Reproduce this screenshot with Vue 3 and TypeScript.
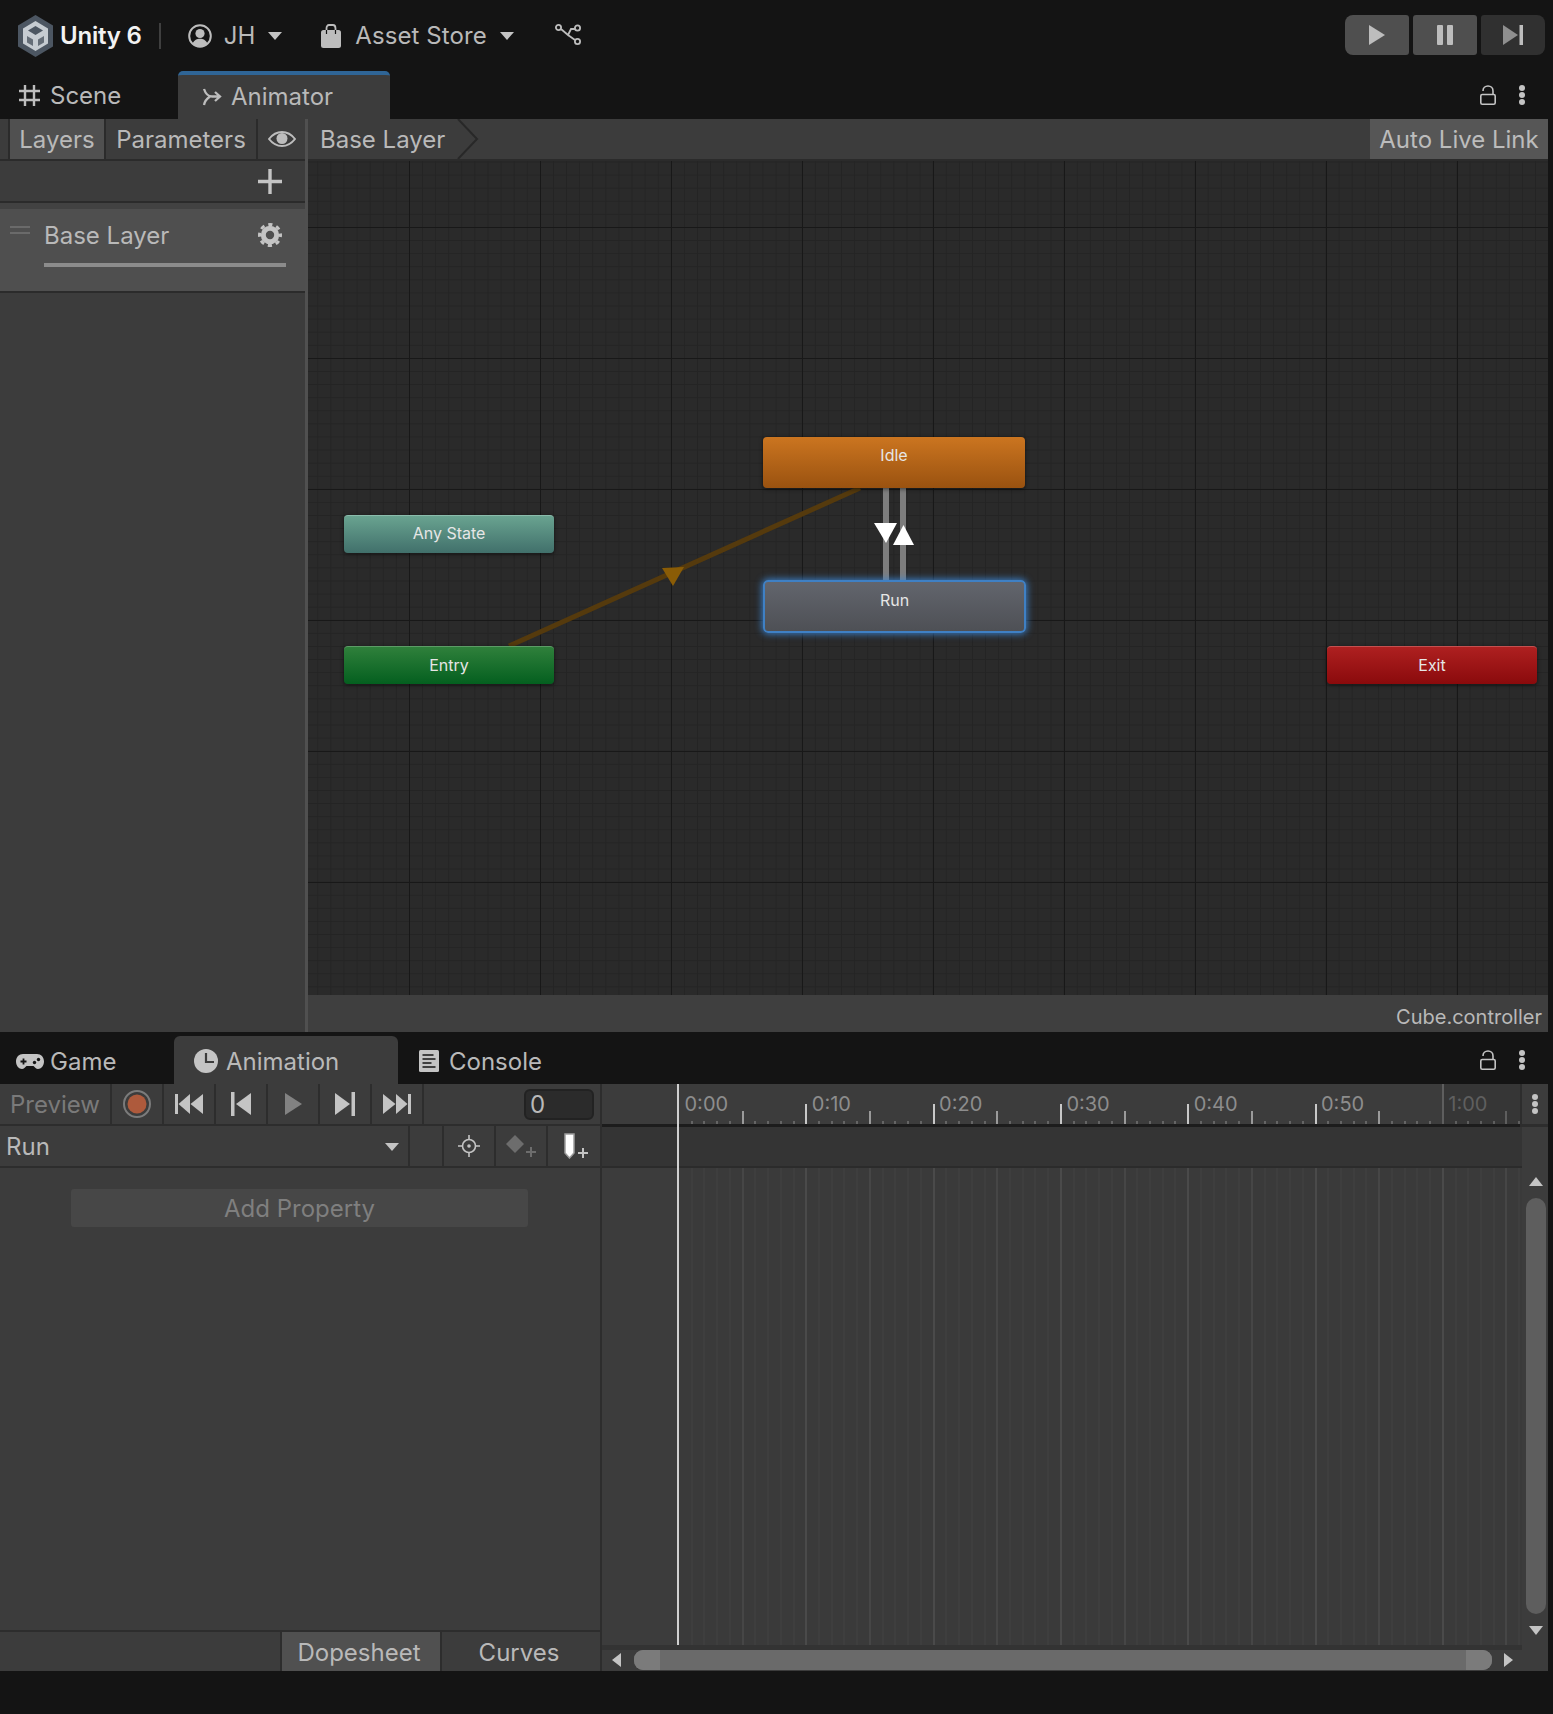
<script setup lang="ts">
import { computed } from 'vue'

interface GraphNode {
  name: string
  kind: string
  x: number
  y: number
  w: number
  h: number
}

// state machine nodes, in canvas coordinates
const nodes: GraphNode[] = [
  { name: 'Idle', kind: 'idle', x: 455, y: 276, w: 262, h: 51 },
  { name: 'Run', kind: 'run', x: 455, y: 419, w: 263, h: 53 },
  { name: 'Any State', kind: 'any', x: 36, y: 354, w: 210, h: 38 },
  { name: 'Entry', kind: 'entry', x: 36, y: 485, w: 210, h: 38 },
  { name: 'Exit', kind: 'exit', x: 1019, y: 485, w: 210, h: 38 },
]

// timeline: 0:00 sits 76px into the pane, one second is 12.73px
const originX = 76
const secondWidth = 12.73
const paneWidth = 920

const ticks = computed(() => {
  const list: { x: number; kind: string; late: boolean }[] = []
  for (let i = 1; originX + i * secondWidth < paneWidth; i++) {
    const kind = i % 10 === 0 ? 'major' : i % 5 === 0 ? 'half' : 'minor'
    list.push({ x: originX + i * secondWidth, kind, late: i >= 60 })
  }
  return list
})

const labels = ['0:00', '0:10', '0:20', '0:30', '0:40', '0:50', '1:00'].map((text, i) => ({
  text,
  x: originX + i * 10 * secondWidth + 6.5,
  late: i === 6,
}))

const lateX = originX + 60 * secondWidth
</script>

<template>
  <div class="editor">
    <header class="topbar">
      <svg class="logo" viewBox="0 0 35 42">
        <polygon points="17.5,0 35,10.5 35,31.5 17.5,42 0,31.5 0,10.5" fill="#4c5662" />
        <polygon points="17.5,6 30,13.5 30,28.5 17.5,36 5,28.5 5,13.5" fill="#c6ccd2" />
        <polygon points="17.5,11 25,15.5 17.5,20 10,15.5" fill="#4c5662" />
        <polygon points="9,21 15,24.5 15,31 9,27.5" fill="#4c5662" opacity=".8" />
        <polygon points="26,21 20,24.5 20,31 26,27.5" fill="#4c5662" opacity=".8" />
      </svg>
      <strong class="brand">Unity 6</strong>
      <span class="brand-sep"></span>
      <svg class="ico-user" viewBox="0 0 24 24">
        <circle cx="12" cy="12" r="10.800" fill="none" stroke="#bdbdbd" stroke-width="2" />
        <circle cx="12" cy="9.500" r="4.600" fill="#bdbdbd" />
        <path d="M4.600 19.500c1.600-3.600 4.400-4.700 7.400-4.700s5.800 1.100 7.400 4.700c-2 2.200-4.500 3.500-7.400 3.500s-5.400-1.300-7.400-3.500z" fill="#bdbdbd" />
      </svg>
      <span class="top-label jh">JH</span>
      <span class="caret top-caret"></span>
      <svg class="ico-bag" viewBox="0 0 20 24">
        <path d="M5.500 9V4.500C5.500 2.500 6.500 1 8 1h4c1.500 0 2.500 1.500 2.500 3.500V9" fill="none" stroke="#bdbdbd" stroke-width="1.800" />
        <rect x="0" y="6" width="20" height="18" rx="2.500" fill="#bdbdbd" />
        <path d="M5.500 6v4M14.500 6v4" stroke="#141414" stroke-width="1.200" />
      </svg>
      <span class="top-label store">Asset Store</span>
      <span class="caret top-caret"></span>
      <svg class="ico-graph" viewBox="0 0 26 21">
        <g fill="none" stroke="#bdbdbd" stroke-width="1.800">
          <circle cx="3.500" cy="3.500" r="2.600" />
          <circle cx="22.500" cy="4" r="2.600" />
          <circle cx="22.500" cy="17.500" r="2.600" />
          <path d="M6 5l7 6 3-6h4M13 11l7 5" />
        </g>
      </svg>
      <div class="transport">
        <button class="play-btn">
          <svg viewBox="0 0 16 20" width="16" height="20"><polygon points="0,0 16,10 0,20" fill="#bdbdbd" /></svg>
        </button>
        <button class="play-btn">
          <svg viewBox="0 0 16 20" width="16" height="20"><rect width="6" height="20" rx="1" fill="#bdbdbd" /><rect x="10" width="6" height="20" rx="1" fill="#bdbdbd" /></svg>
        </button>
        <button class="play-btn dim">
          <svg viewBox="0 0 20 20" width="20" height="20"><polygon points="0,0 15,10 0,20" fill="#8f8f8f" /><rect x="16.500" width="3.500" height="20" fill="#bdbdbd" /></svg>
        </button>
      </div>
    </header>

    <section class="dock">
      <div class="tabstrip">
        <div class="tab scene-tab">
          <svg class="ico-hash" viewBox="0 0 21 21">
            <path d="M6 0v21M15 0v21M0 6h21M0 15h21" stroke="#bdbdbd" stroke-width="2.400" fill="none" />
          </svg>
          <span>Scene</span>
        </div>
        <div class="tab tab-active tab-blue animator-tab">
          <svg class="ico-animator" viewBox="0 0 20 18">
            <path d="M2 1c1.500 4.500 4 7.500 8 7.500h7M2 17c.6-3.500 3-6.500 6-8.500M13 4l5 4.500-5 4.500" fill="none" stroke="#bdbdbd" stroke-width="2.300" />
          </svg>
          <span>Animator</span>
        </div>
        <div class="dock-tools">
          <svg class="ico-lock" viewBox="0 0 16 20"><path d="M3 6C3 3 5.200 1 8 1s5 2 5 5v4" fill="none" stroke="#c4c4c4" stroke-width="1.600" /><rect x=".8" y="9.500" width="14.400" height="9.700" rx="1.500" fill="none" stroke="#c4c4c4" stroke-width="1.600" /></svg>
          <span class="dots"><i></i><i></i><i></i></span>
        </div>
      </div>

      <div class="animator">
        <aside class="layers">
          <div class="subtabs">
            <span class="sub-stub"></span>
            <span class="subtab on layers-tab">Layers</span>
            <span class="subtab params-tab">Parameters</span>
            <span class="subtab eye-tab">
              <svg viewBox="0 0 28 16" width="28" height="16">
                <path d="M1 8c3.500-4.500 8-7 13-7s9.500 2.500 13 7c-3.500 4.500-8 7-13 7S4.500 12.500 1 8z" fill="none" stroke="#bdbdbd" stroke-width="2" />
                <circle cx="14" cy="7.500" r="5.500" fill="#bdbdbd" />
              </svg>
            </span>
          </div>
          <div class="add-row">
            <svg viewBox="0 0 24 25" width="24" height="25"><path d="M12 0v25M0 12.500h24" stroke="#c4c4c4" stroke-width="3.400" /></svg>
          </div>
          <div class="layer-gap"></div>
          <div class="layer-row">
            <span class="grip"><i></i><i></i></span>
            <div class="layer-body">
              <div class="layer-head">
                <span>Base Layer</span>
                <svg viewBox="0 0 24 24" width="24" height="24">
                  <circle cx="12" cy="12" r="6.700" fill="none" stroke="#c4c4c4" stroke-width="5" />
                  <circle cx="12" cy="12" r="10.500" fill="none" stroke="#c4c4c4" stroke-width="3" stroke-dasharray="4.200 4.050" stroke-dashoffset="2.100" />
                </svg>
              </div>
              <div class="layer-weight"></div>
            </div>
          </div>
        </aside>

        <div class="graph-pane">
          <div class="breadcrumb">
            <div class="crumb">
              <span>Base Layer</span>
              <svg viewBox="0 0 22 40" width="22" height="40"><path d="M1 0l19 20L1 40" fill="none" stroke="#282828" stroke-width="2" /></svg>
            </div>
            <button class="live-link">Auto Live Link</button>
          </div>

          <div class="canvas">
            <svg class="wires" viewBox="0 0 1240 834">
              <line x1="201" y1="485" x2="552" y2="327" stroke="#553a0d" stroke-width="5" />
              <polygon points="354,407 376,406 365,425" fill="#8a5c06" />
              <g stroke="#7d7d7d" stroke-width="6">
                <line x1="578" y1="327" x2="578" y2="420" />
                <line x1="595" y1="327" x2="595" y2="420" />
              </g>
              <polygon points="566,362 589,362 578,382" fill="#fff" />
              <polygon points="585,384 606,384 595.500,364" fill="#fff" />
            </svg>
            <div
              v-for="n in nodes"
              :key="n.name"
              class="node"
              :class="n.kind"
              :style="{ left: n.x + 'px', top: n.y + 'px', width: n.w + 'px', height: n.h + 'px' }"
            >{{ n.name }}</div>
          </div>

          <div class="status">Cube.controller</div>
        </div>
      </div>
    </section>

    <section class="dock bottom-dock">
      <div class="tabstrip low">
        <div class="tab game-tab">
          <svg class="ico-game" viewBox="0 0 28 15">
            <path d="M7 0h14c4 0 7 3 7 7.500S25 15 22 15c-2 0-3-1.500-4.500-3h-7C9 13.500 8 15 6 15 3 15 0 12 0 7.500S3 0 7 0z" fill="#c4c4c4" />
            <path d="M4.500 7.500h6M7.500 4.500v6" stroke="#141414" stroke-width="1.800" />
            <circle cx="18.500" cy="8.500" r="1.700" fill="#141414" />
            <circle cx="22.500" cy="5.500" r="1.700" fill="#141414" />
          </svg>
          <span>Game</span>
        </div>
        <div class="tab tab-active animation-tab">
          <svg class="ico-clock" viewBox="0 0 24 24">
            <circle cx="12" cy="12" r="12" fill="#c4c4c4" />
            <path d="M12 4v9h8" fill="none" stroke="#3c3c3c" stroke-width="2.200" />
          </svg>
          <span>Animation</span>
        </div>
        <div class="tab console-tab">
          <svg class="ico-console" viewBox="0 0 20 22">
            <rect width="20" height="22" rx="1.500" fill="#c4c4c4" />
            <path d="M3.500 5h11M3.500 9h13M3.500 13h9M3.500 17h13" stroke="#141414" stroke-width="1.600" />
          </svg>
          <span>Console</span>
        </div>
        <div class="dock-tools">
          <svg class="ico-lock" viewBox="0 0 16 20"><path d="M3 6C3 3 5.200 1 8 1s5 2 5 5v4" fill="none" stroke="#c4c4c4" stroke-width="1.600" /><rect x=".8" y="9.500" width="14.400" height="9.700" rx="1.500" fill="none" stroke="#c4c4c4" stroke-width="1.600" /></svg>
          <span class="dots"><i></i><i></i><i></i></span>
        </div>
      </div>

      <div class="anim">
        <div class="anim-left">
          <div class="transport-row">
            <span class="cell preview">Preview</span>
            <span class="cell ctl">
              <svg viewBox="0 0 28 28" width="28" height="28"><circle cx="14" cy="14" r="13" fill="none" stroke="#7b7b7b" stroke-width="2" /><circle cx="14" cy="14" r="9.500" fill="#ae5a3c" /></svg>
            </span>
            <span class="cell ctl">
              <svg viewBox="0 0 28 20" width="28" height="20"><rect width="3" height="20" fill="#c4c4c4" /><polygon points="15,0 15,20 3.500,10" fill="#c4c4c4" /><polygon points="28,0 28,20 15.500,10" fill="#c4c4c4" /></svg>
            </span>
            <span class="cell ctl">
              <svg viewBox="0 0 20 24" width="20" height="24"><rect width="3.500" height="24" fill="#c4c4c4" /><polygon points="20,1 20,23 5,12" fill="#c4c4c4" /></svg>
            </span>
            <span class="cell ctl">
              <svg viewBox="0 0 17 22" width="17" height="22"><polygon points="0,0 17,11 0,22" fill="#828282" /></svg>
            </span>
            <span class="cell ctl">
              <svg viewBox="0 0 20 24" width="20" height="24"><polygon points="0,1 0,23 15,12" fill="#c4c4c4" /><rect x="16.500" width="3.500" height="24" fill="#c4c4c4" /></svg>
            </span>
            <span class="cell ctl">
              <svg viewBox="0 0 28 20" width="28" height="20"><polygon points="0,0 0,20 12.500,10" fill="#c4c4c4" /><polygon points="13,0 13,20 24.500,10" fill="#c4c4c4" /><rect x="25" width="3" height="20" fill="#c4c4c4" /></svg>
            </span>
            <span class="cell frame-cell"><span class="frame-field">0</span></span>
          </div>
          <div class="clip-row">
            <span class="clip-name"><span>Run</span><span class="caret clip-caret"></span></span>
            <span class="cell blank"></span>
            <span class="cell key">
              <svg viewBox="0 0 22 22" width="22" height="22">
                <circle cx="11" cy="11" r="6.500" fill="none" stroke="#c4c4c4" stroke-width="1.600" />
                <circle cx="11" cy="11" r="1.800" fill="#c4c4c4" />
                <path d="M11 0v5M11 17v5M0 11h5M17 11h5" stroke="#c4c4c4" stroke-width="1.600" />
              </svg>
            </span>
            <span class="cell key">
              <svg viewBox="0 0 30 24" width="30" height="24">
                <polygon points="9,1 18,10 9,19 0,10" fill="#6d6d6d" />
                <path d="M20 18h10M25 13v10" stroke="#6d6d6d" stroke-width="2" />
              </svg>
            </span>
            <span class="cell key">
              <svg class="marker" viewBox="0 0 24 26" width="24" height="26">
                <path d="M1 1h9v19l-4.500 5L1 20z" fill="#fff" stroke="#9d9d9d" stroke-width="1.500" />
                <path d="M14 20h10M19 15v10" stroke="#c4c4c4" stroke-width="2" />
              </svg>
            </span>
          </div>
          <div class="props">
            <button class="add-prop">Add Property</button>
          </div>
          <div class="mode-row">
            <span class="mode on">Dopesheet</span>
            <span class="mode">Curves</span>
          </div>
        </div>

        <div class="anim-right">
          <div class="ruler-row">
            <div class="ruler">
              <div class="ruler-late" :style="{ left: lateX + 'px' }"></div>
              <i
                v-for="t in ticks"
                :key="t.x"
                class="tick"
                :class="[t.kind, { late: t.late }]"
                :style="{ left: t.x + 'px' }"
              ></i>
              <span
                v-for="l in labels"
                :key="l.text"
                class="time"
                :class="{ late: l.late }"
                :style="{ left: l.x + 'px' }"
              >{{ l.text }}</span>
            </div>
            <span class="ruler-menu"><span class="dots"><i></i><i></i><i></i></span></span>
          </div>
          <div class="lanes-row">
            <div class="lanes-main">
              <div class="band"></div>
              <div class="lanes">
                <div class="lanes-fill"></div>
                <i
                  v-for="t in ticks"
                  :key="'s' + t.x"
                  class="stripe"
                  :class="t.kind"
                  :style="{ left: t.x + 'px' }"
                ></i>
              </div>
            </div>
            <div class="vscroll">
              <span class="arrow-up"></span>
              <span class="vthumb"></span>
              <span class="arrow-down"></span>
            </div>
            <div class="playhead"></div>
          </div>
          <div class="hscroll">
            <span class="arrow-left"></span>
            <span class="hthumb"><i></i><i class="end"></i></span>
            <span class="arrow-right"></span>
          </div>
        </div>
      </div>
    </section>
  </div>
</template>

<style scoped>
.editor {
  width: 1553px;
  height: 1714px;
  background: #141414;
  color: #b9b9b9;
  font-family: Inter, 'Liberation Sans', sans-serif;
  font-size: 24px;
  overflow: hidden;
  display: flex;
  flex-direction: column;
}
.editor * { box-sizing: border-box; }
svg { display: block; flex: none; }
button { font: inherit; border: 0; padding: 0; color: inherit; }

/* top bar */
.topbar {
  height: 71px;
  padding-left: 18px;
  display: flex;
  align-items: center;
  flex: none;
}
.logo { width: 35px; height: 42px; }
.brand { color: #f2f2f2; font-weight: 600; margin-left: 7px; letter-spacing: -.2px; }
.brand-sep { width: 2px; height: 26px; background: #3f3f3f; margin: 0 27px 0 17px; }
.ico-user { width: 24px; height: 24px; }
.top-label { line-height: 1; }
.jh { margin-left: 12px; }
.caret {
  width: 0;
  height: 0;
  border-left: 7px solid transparent;
  border-right: 7px solid transparent;
  border-top: 8px solid #c4c4c4;
}
.top-caret { margin-left: 13px; }
.ico-bag { width: 20px; height: 24px; margin-left: 39px; }
.store { margin-left: 14px; letter-spacing: .1px; }
.ico-graph { width: 26px; height: 21px; margin-left: 41px; margin-top: -3px; }
.transport { margin-left: auto; margin-right: 8px; display: flex; gap: 4px; margin-top: -1px; }
.play-btn {
  width: 64px;
  height: 40px;
  background: #4f4f4f;
  border-radius: 3px;
  display: flex;
  align-items: center;
  justify-content: center;
}
.play-btn:first-child { border-radius: 8px 3px 3px 8px; }
.play-btn.dim { background: #303030; border-radius: 3px 8px 8px 3px; }

/* docks */
.dock { width: 1548px; flex: none; display: flex; flex-direction: column; }
.tabstrip { height: 48px; display: flex; flex: none; align-items: stretch; position: relative; }
.tab { display: flex; align-items: center; }
.tab-active { background: #3c3c3c; }
.scene-tab { width: 178px; padding-left: 19px; gap: 10px; padding-top: 1px; }
.ico-hash { width: 21px; height: 21px; }
.animator-tab { width: 212px; padding-left: 24px; gap: 9px; padding-bottom: 1px; }
.tab-blue { border-top: 4px solid #2f6596; border-radius: 5px 5px 0 0; }
.ico-animator { width: 20px; height: 18px; }
.dock-tools {
  position: absolute;
  right: 23px;
  top: 14px;
  display: flex;
  align-items: center;
  gap: 23px;
}
.ico-lock { width: 16px; height: 20px; }
.dots { display: flex; flex-direction: column; gap: 1px; width: 6px; }
.dots i { width: 6px; height: 6px; border-radius: 50%; background: #c4c4c4; }

/* animator window */
.animator { height: 913px; display: flex; flex: none; background: #3c3c3c; }
.layers { width: 305px; flex: none; display: flex; flex-direction: column; }
.subtabs { height: 42px; display: flex; flex: none; border-bottom: 2px solid #2b2b2b; }
.sub-stub { width: 8px; }
.subtab {
  display: flex;
  align-items: center;
  justify-content: center;
  border-left: 2px solid #2b2b2b;
}
.subtab.on { background: #505050; }
.layers-tab { width: 96px; }
.params-tab { width: 152px; }
.eye-tab { flex: 1; justify-content: flex-start; padding-left: 10px; }
.add-row {
  height: 42px;
  flex: none;
  display: flex;
  align-items: center;
  justify-content: flex-end;
  padding-right: 23px;
  border-bottom: 2px solid #2b2b2b;
}
.layer-gap { height: 6px; flex: none; background: #424242; }
.layer-row {
  height: 84px;
  flex: none;
  background: #4f4f4f;
  border-bottom: 2px solid #2b2b2b;
  display: flex;
  padding-left: 10px;
}
.grip { width: 20px; margin-top: 17px; display: flex; flex-direction: column; gap: 4px; }
.grip i { height: 2px; background: #6a6a6a; }
.layer-body { margin-left: 14px; width: 242px; }
.layer-head {
  height: 36px;
  margin-top: 8px;
  display: flex;
  align-items: center;
  justify-content: space-between;
  padding-right: 4px;
}
.layer-weight { height: 4px; background: #8c8c8c; margin-top: 10px; }

.graph-pane {
  flex: 1;
  min-width: 0;
  border-left: 3px solid #505050;
  display: flex;
  flex-direction: column;
}
.breadcrumb {
  height: 42px;
  flex: none;
  display: flex;
  justify-content: space-between;
  border-bottom: 2px solid #2b2b2b;
  padding-left: 12px;
}
.crumb { display: flex; align-items: center; gap: 12px; }
.live-link {
  width: 178px;
  background: #565656;
  color: #bcbcbc;
  white-space: nowrap;
}
.canvas {
  flex: 1;
  position: relative;
  overflow: hidden;
  background-color: #2a2a2a;
  background-image:
    linear-gradient(#181818 1px, transparent 1px),
    linear-gradient(90deg, #181818 1px, transparent 1px),
    linear-gradient(#242424 1px, transparent 1px),
    linear-gradient(90deg, #242424 1px, transparent 1px);
  background-size: 131px 131px, 131px 131px, 13.1px 13.1px, 13.1px 13.1px;
  background-position: 0 66px, 101px 0, 0 .5px, 9.3px 0;
}
.wires { position: absolute; left: 0; top: 0; width: 1240px; height: 834px; }
.node {
  position: absolute;
  border-radius: 4px;
  font-size: 16px;
  line-height: 37px;
  text-align: center;
  color: #e6e6e6;
  box-shadow: 0 1px 4px rgba(0, 0, 0, .55);
}
.idle { background: linear-gradient(#cb7520, #9a5210); }
.run {
  background: linear-gradient(#62656d, #4e5055);
  border: 2px solid #3f80c4;
  border-radius: 5px;
  line-height: 36px;
  box-shadow: 0 0 7px 1px rgba(60, 135, 215, .9);
}
.any { background: linear-gradient(#69a390, #41706b); border-top: 1px solid #8bbcac; line-height: 35px; }
.entry { background: linear-gradient(#2f803b, #045f1f); border-top: 1px solid #5c9c66; line-height: 36px; }
.exit { background: linear-gradient(#ae2020, #8a0a0c); border-top: 1px solid #c45050; line-height: 36px; }
.status {
  height: 37px;
  flex: none;
  background: #3f3f3f;
  text-align: right;
  padding-right: 6px;
  font-size: 20px;
  line-height: 44px;
  overflow: hidden;
}

/* bottom dock */
.low { height: 52px; }
.low .tab { padding-top: 6px; }
.game-tab { width: 174px; padding-left: 16px; gap: 6px; }
.ico-game { width: 28px; height: 15px; }
.animation-tab {
  width: 224px;
  margin-top: 4px;
  border-radius: 6px 6px 0 0;
  padding-left: 20px;
  gap: 8px;
}
.low .animation-tab { padding-top: 2px; }
.ico-clock { width: 24px; height: 24px; }
.console-tab { padding-left: 21px; gap: 10px; }
.ico-console { width: 20px; height: 22px; }
.low .dock-tools { top: 18px; }

.anim { height: 587px; flex: none; display: flex; background: #3c3c3c; }
.anim-left {
  width: 602px;
  flex: none;
  display: flex;
  flex-direction: column;
  border-right: 2px solid #2d2d2d;
}
.transport-row, .clip-row {
  height: 42px;
  flex: none;
  display: flex;
  border-bottom: 2px solid #2d2d2d;
}
.cell {
  display: flex;
  align-items: center;
  justify-content: center;
  border-right: 2px solid #2d2d2d;
}
.preview { width: 112px; color: #7a7a7a; }
.ctl { width: 52px; }
.frame-cell { flex: 1; border-right: 0; justify-content: flex-end; padding-right: 6px; }
.frame-field {
  width: 70px;
  height: 31px;
  background: #2b2b2b;
  border: 2px solid #222;
  border-radius: 6px;
  padding-left: 4px;
  line-height: 27px;
}
.clip-name {
  width: 411px;
  border-right: 2px solid #2d2d2d;
  display: flex;
  align-items: center;
  justify-content: space-between;
  padding: 0 9px 0 6px;
}
.clip-caret { margin-top: 2px; }
.blank { width: 34px; }
.key { width: 52px; }
.key:last-child { border-right: 0; }
.marker { margin-left: 3px; }
.props { flex: 1; padding-top: 21px; border-bottom: 2px solid #2d2d2d; }
.add-prop {
  display: block;
  width: 457px;
  height: 38px;
  margin-left: 71px;
  background: #474747;
  border-radius: 3px;
  color: #7f7f7f;
}
.mode-row { height: 39px; flex: none; display: flex; justify-content: flex-end; }
.mode {
  width: 160px;
  display: flex;
  align-items: center;
  justify-content: center;
  padding: 1px 4px 0 0;
  border-left: 2px solid #2d2d2d;
}
.mode.on { background: #505050; }

.anim-right { flex: 1; min-width: 0; display: flex; flex-direction: column; }
.ruler-row { height: 43px; flex: none; display: flex; }
.ruler {
  width: 918px;
  height: 43px;
  position: relative;
  overflow: hidden;
  border-bottom: 3px solid #1c1c1c;
}
.ruler-late { position: absolute; right: 0; top: 0; bottom: 0; background: #363636; }
.tick { position: absolute; bottom: 0; width: 2px; }
.tick.minor { height: 3px; background: #656565; }
.tick.half { height: 13px; background: #9a9a9a; }
.tick.major { height: 20px; background: #c8c8c8; }
.tick.major.late { height: 40px; background: #5e5e5e; }
.tick.half.late, .tick.minor.late { background: #5e5e5e; }
.time {
  position: absolute;
  top: 7px;
  font-size: 20px;
  line-height: 26px;
  color: #8d8d8d;
}
.time.late { color: #5f5f5f; }
.ruler-menu {
  flex: 1;
  border-left: 2px solid #2d2d2d;
  border-bottom: 3px solid #2d2d2d;
  height: 43px;
  display: flex;
  justify-content: center;
  padding-top: 10px;
}
.lanes-row { flex: 1; display: flex; position: relative; min-height: 0; }
.lanes-main { width: 920px; flex: none; display: flex; flex-direction: column; }
.band {
  height: 41px;
  flex: none;
  background: #343434;
  border-bottom: 2px solid #2b2b2b;
}
.lanes { flex: 1; position: relative; overflow: hidden; border-bottom: 5px solid #333; }
.lanes-fill { position: absolute; left: 76px; right: 0; top: 0; bottom: 0; background: #3a3a3a; }
.stripe { position: absolute; top: 0; bottom: 0; width: 2px; }
.stripe.minor { background: #3e3e3e; }
.stripe.half { background: #464646; }
.stripe.major { background: #4a4a4a; }
.vscroll {
  flex: 1;
  position: relative;
}
.arrow-up, .arrow-down {
  position: absolute;
  left: 7px;
  width: 0;
  height: 0;
  border-left: 7px solid transparent;
  border-right: 7px solid transparent;
}
.arrow-up { top: 50px; border-bottom: 9px solid #c4c4c4; }
.arrow-down { top: 499px; border-top: 9px solid #c4c4c4; }
.vthumb {
  position: absolute;
  left: 4px;
  top: 71px;
  width: 20px;
  height: 416px;
  border-radius: 10px;
  background: #5e5e5e;
}
.playhead {
  position: absolute;
  left: 75px;
  top: -43px;
  bottom: 5px;
  width: 2px;
  background: #d0d0d0;
}
.hscroll { height: 21px; flex: none; position: relative; }
.arrow-left, .arrow-right {
  position: absolute;
  top: 3px;
  width: 0;
  height: 0;
  border-top: 7px solid transparent;
  border-bottom: 7px solid transparent;
}
.arrow-left { left: 10px; border-right: 9px solid #c4c4c4; }
.arrow-right { left: 902px; border-left: 9px solid #c4c4c4; }
.hthumb {
  position: absolute;
  left: 32px;
  top: 0;
  width: 858px;
  height: 20px;
  background: #6a6a6a;
  border-radius: 9px;
  overflow: hidden;
}
.hthumb i {
  position: absolute;
  left: 0;
  top: 0;
  bottom: 0;
  width: 26px;
  background: #7b7b7b;
}
.hthumb i.end { left: auto; right: 0; }
</style>
